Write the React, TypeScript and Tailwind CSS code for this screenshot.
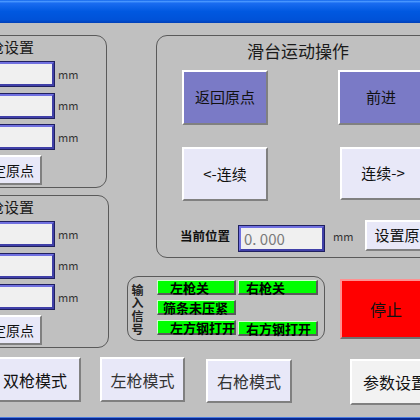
import React from 'react';

const FONT = { fontFamily: '"Noto Sans CJK SC", "Noto Sans", sans-serif' };

// Raised lavender button with a Windows-style bevel
function BevelButton({ className = '', children }: { className?: string; children: React.ReactNode }) {
  return (
    <div
      className={`flex items-center border-t-2 border-l-2 border-b-2 border-r-2 border-t-white border-l-white border-b-[#808080] border-r-[#808080] text-[#111] ${className}`}
    >
      {children}
    </div>
  );
}

function Field({ value = '', className = '' }: { value?: string; className?: string }) {
  return (
    <div className={`border border-[#202060] ${className}`}>
      <div className="w-full h-full border-2 border-t-[#7070e0] border-l-[#7070e0] border-b-[#4040a8] border-r-[#4040a8] bg-[#f0f0f0] flex items-center pl-[3px] text-[15px] text-[#7a7a7a] leading-none">
        {value}
      </div>
    </div>
  );
}

function AxisPanel({ width }: { width: string }) {
  return (
    <div className={`${width} h-[153px] rounded-r-[11px] border border-[#5a5a5a] pt-[3px]`}>
      <div className="h-[16px] leading-[16px] text-[15px] text-[#1a1a1a] pl-[13px]">左枪设置</div>
      <div className="mt-[6px] flex flex-col gap-[5.5px]">
        {[0, 1, 2].map((i) => (
          <div key={i} className="flex items-center">
            <Field className="w-[94px] h-[26px]" />
            <span className="ml-[3px] text-[11px] text-[#333] leading-none">mm</span>
          </div>
        ))}
      </div>
      <BevelButton className="mt-[5px] w-[81px] h-[30px] bg-[#e8e8f8] justify-end pr-[6px] text-[14px]">
        设定原点
      </BevelButton>
    </div>
  );
}

function Signal({ text, className = '' }: { text: string; className?: string }) {
  return (
    <div
      className={`h-[15px] bg-[#00ff00] border-t border-l border-t-[#d0ffd0] border-l-[#d0ffd0] border-b-2 border-r-2 border-b-[#5a5a5a] border-r-[#5a5a5a] text-[13px] font-bold leading-[13px] text-black whitespace-nowrap overflow-visible ${className}`}
    >
      {text}
    </div>
  );
}

export default function App() {
  return (
    <div className="w-[420px] h-[420px] bg-[#c0c0c0] overflow-hidden flex flex-col" style={FONT}>
      {/* Title bar */}
      <div className="h-[23px] shrink-0 bg-[linear-gradient(to_bottom,#0a5ee8_0%,#4a98ff_6%,#1a6cf0_14%,#0058e0_50%,#0052d8_85%,#0040b8_100%)]" />

      {/* Main area */}
      <div className="mt-[12px] flex">
        {/* Left column */}
        <div className="ml-[-40px] flex flex-col gap-[7px]">
          <AxisPanel width="w-[147px]" />
          <AxisPanel width="w-[149px]" />
        </div>

        {/* Right column */}
        <div className="ml-[18px] flex flex-col">
          <div className="ml-[29px] w-[284px] h-[223px] shrink-0 rounded-[11px] border border-[#5a5a5a] pt-[6px]">
            <div className="h-[17px] leading-[17px] text-[17px] text-[#1a1a1a] text-center">滑台运动操作</div>
            <div className="mt-[11px] ml-[25px] flex gap-[70px]">
              <BevelButton className="w-[86px] h-[55px] shrink-0 bg-[#7a7ac6] justify-center text-[15px]">返回原点</BevelButton>
              <BevelButton className="w-[86px] h-[55px] shrink-0 bg-[#7a7ac6] justify-center text-[15px]">前进</BevelButton>
            </div>
            <div className="mt-[22px] ml-[25px] flex gap-[72px]">
              <BevelButton className="w-[86px] h-[54px] shrink-0 bg-[#e8e8f8] justify-center text-[15px]">&lt;-连续</BevelButton>
              <BevelButton className="w-[86px] h-[53px] shrink-0 bg-[#e8e8f8] justify-center text-[15px]">连续-&gt;</BevelButton>
            </div>
            <div className="mt-[20px] ml-[23px] h-[31px] flex items-center">
              <span className="w-[50px] shrink-0 text-[12.5px] font-bold text-[#111] leading-none whitespace-nowrap">当前位置</span>
              <Field value="0. 000" className="ml-[8px] w-[87px] h-[27px] mt-[3px] shrink-0" />
              <span className="ml-[8px] text-[11px] text-[#333] leading-none">mm</span>
              <BevelButton className="ml-[12px] w-[90px] h-[31px] mb-[2px] shrink-0 bg-[#e8e8f8] pl-[7px] text-[15px] whitespace-nowrap">
                设置原点
              </BevelButton>
            </div>
          </div>

          <div className="mt-[18px] flex items-start">
            {/* Input signals */}
            <div className="w-[198px] h-[65px] shrink-0 rounded-[11px] border border-[#5a5a5a] flex pt-[3px]">
              <div className="ml-[3px] w-[13px] pt-[4px] flex justify-center">
                <span className="[writing-mode:vertical-rl] text-[12px] font-bold leading-[13px] tracking-[1px] text-[#222]">
                  输入信号
                </span>
              </div>
              <div className="ml-[13px] grid grid-cols-[79px_80px] gap-x-[2px] gap-y-[5px] content-start">
                <Signal text="左枪关" className="pl-[12px]" />
                <Signal text="右枪关" className="pl-[7px]" />
                <Signal text="筛条未压紧" className="pl-[5px]" />
                <div />
                <Signal text="左方钢打开" className="pl-[12px]" />
                <Signal text="右方钢打开" className="pl-[7px] mt-[1px]" />
              </div>
            </div>

            <div className="ml-[15px] mt-[3px] w-[92px] h-[60px] shrink-0 bg-[#ff0000] border-t-2 border-l-2 border-t-[#ff9090] border-l-[#ff9090] border-b-2 border-r-2 border-b-[#707070] border-r-[#707070] flex items-center pl-[28px] text-[16px] text-[#111]">
              停止
            </div>
          </div>
        </div>
      </div>

      {/* Mode buttons */}
      <div className="mt-[9px] flex items-start">
        <BevelButton className="ml-[-11px] w-[92px] h-[45px] shrink-0 bg-[#e8e8f8] justify-center text-[16px]">双枪模式</BevelButton>
        <BevelButton className="ml-[19px] w-[85px] h-[45px] shrink-0 bg-[#e8e8f8] justify-center text-[16px] text-[#333]">左枪模式</BevelButton>
        <BevelButton className="ml-[21px] mt-[2px] w-[86px] h-[44px] shrink-0 bg-[#e8e8f8] justify-center text-[16px] text-[#333]">右枪模式</BevelButton>
        <BevelButton className="ml-[58px] mt-[2px] w-[90px] h-[46px] shrink-0 bg-[#f2f2f2] pl-[11px] text-[16px] whitespace-nowrap">参数设置</BevelButton>
      </div>

      <div className="flex-1" />
      {/* Taskbar edge */}
      <div className="h-[3px] shrink-0 border-t border-[#4a7ae0] bg-[#0a2a90]" />
    </div>
  );
}
